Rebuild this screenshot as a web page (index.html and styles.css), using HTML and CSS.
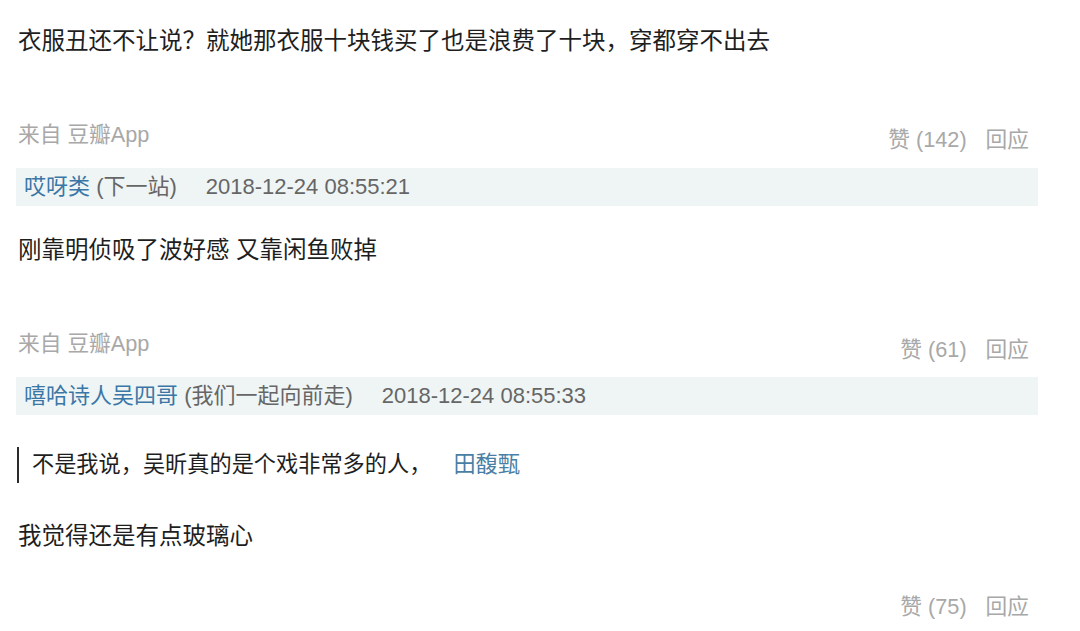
FILE: index.html
```html
<!DOCTYPE html>
<html lang="zh-CN">
<head>
<meta charset="utf-8">
<title>评论</title>
<link rel="stylesheet" href="styles.css">
</head>
<body>
<div class="page">
  <section class="comment first">
    <p class="text">衣服丑还不让说？就她那衣服十块钱买了也是浪费了十块，穿都穿不出去</p>
    <div class="footer">
      <span class="source">来自 豆瓣App</span>
      <span class="actions"><span class="like">赞 (142)</span><span class="reply">回应</span></span>
    </div>
  </section>

  <section class="comment">
    <div class="bar"><a class="author">哎呀类</a> <span class="sign">(下一站)</span><span class="date">2018-12-24 08:55:21</span></div>
    <p class="text t2">刚靠明侦吸了波好感 又靠闲鱼败掉</p>
    <div class="footer">
      <span class="source">来自 豆瓣App</span>
      <span class="actions a2"><span class="like">赞 (61)</span><span class="reply">回应</span></span>
    </div>
  </section>

  <section class="comment">
    <div class="bar"><a class="author">嘻哈诗人吴四哥</a> <span class="sign">(我们一起向前走)</span><span class="date">2018-12-24 08:55:33</span></div>
    <blockquote class="quote"><span>不是我说，吴昕真的是个戏非常多的人，</span><a class="qauthor">田馥甄</a></blockquote>
    <p class="text t3">我觉得还是有点玻璃心</p>
    <div class="footer f3">
      <span class="actions"><span class="like">赞 (75)</span><span class="reply">回应</span></span>
    </div>
  </section>
</div>
</body>
</html>
```

FILE: styles.css
```css
html, body {
  margin: 0;
  padding: 0;
  background: #ffffff;
}
body {
  font-family: "Liberation Sans", "Noto Sans CJK SC", sans-serif;
  color: #222;
}
.page {
  width: 1022px;
  padding: 26px 0 0 16px;
}
.text {
  margin: 0;
  padding-left: 2px;
  font-size: 23.5px;
  line-height: 30px;
  color: #1e1e1e;
}
.t2 { margin-top: 29px; }
.t3 { margin-top: 38px; }
.footer {
  display: flex;
  justify-content: space-between;
  align-items: flex-start;
  margin-top: 64px;
  height: 35px;
  font-size: 21.7px;
  line-height: 30px;
  color: #a8a8a8;
}
.source { padding-left: 2px; }
.actions {
  display: flex;
  gap: 19px;
  margin-top: 5px;
  padding-right: 9px;
}
.a2 { margin-top: 6px; }
.f3 {
  justify-content: flex-end;
  margin-top: 36px;
}
.bar {
  margin-top: 13px;
  height: 38px;
  line-height: 38px;
  padding-left: 8px;
  background: #eff5f5;
  font-size: 22px;
  color: #666;
}
.author { color: #3b77a6; }
.date { margin-left: 29px; }
.quote {
  margin: 32px 0 0 1px;
  border-left: 2px solid #2a2a2a;
  padding-left: 13px;
  font-size: 22.2px;
  line-height: 36px;
  color: #1e1e1e;
}
.qauthor {
  margin-left: 22px;
  color: #4a7fa5;
}
```
